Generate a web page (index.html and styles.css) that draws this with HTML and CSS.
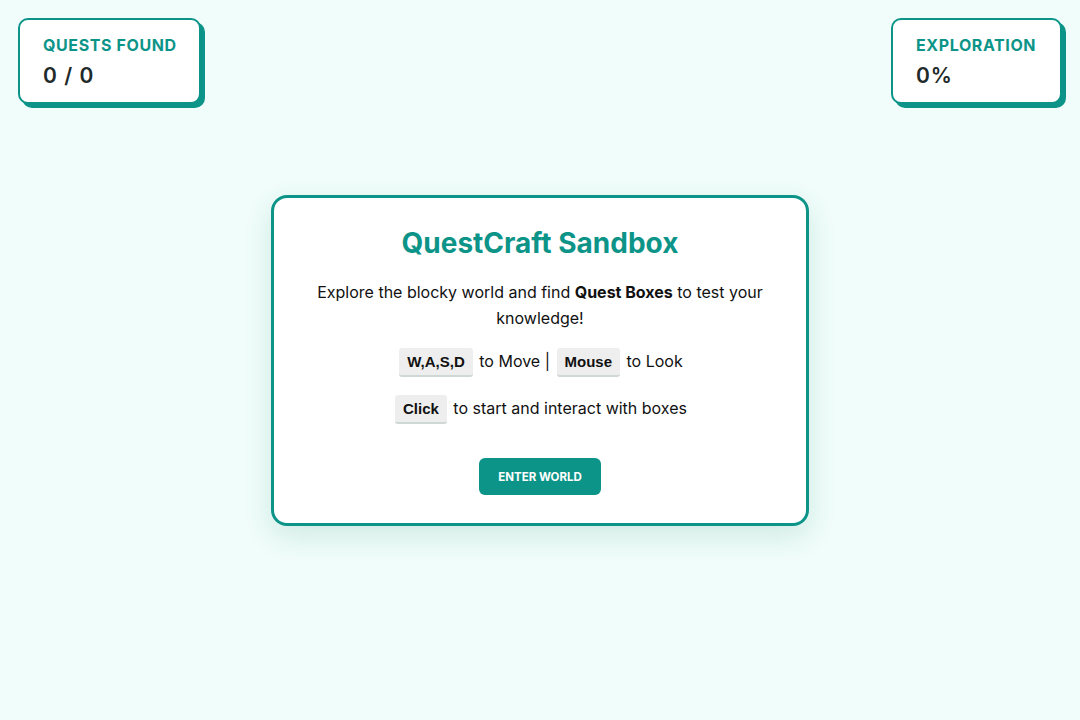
FILE: index.html
```html
<!DOCTYPE html>
<html lang="en">
<head>
<meta charset="utf-8">
<title>QuestCraft Sandbox</title>
<link rel="stylesheet" href="styles.css">
</head>
<body>
<div class="page">
  <header class="hud">
    <div class="stat">
      <div class="stat-label">QUESTS FOUND</div>
      <div class="stat-value">0 / 0</div>
    </div>
    <div class="stat">
      <div class="stat-label">EXPLORATION</div>
      <div class="stat-value">0%</div>
    </div>
  </header>
  <main class="stage">
    <section class="intro">
      <h1 class="title">QuestCraft Sandbox</h1>
      <p class="desc">Explore the blocky world and find <strong>Quest Boxes</strong> to test your knowledge!</p>
      <p class="controls"><kbd class="key">W,A,S,D</kbd> to Move | <kbd class="key">Mouse</kbd> to Look</p>
      <p class="controls"><kbd class="key">Click</kbd> to start and interact with boxes</p>
      <button class="enter">ENTER WORLD</button>
    </section>
  </main>
</div>
</body>
</html>
```
FILE: styles.css
```css
* { box-sizing: border-box; }
html, body { margin: 0; padding: 0; }
body {
  width: 1080px;
  height: 720px;
  background: #f0fdfa;
  font-family: "Inter", "DejaVu Sans", sans-serif;
  color: #111;
  overflow: hidden;
}
.page {
  display: flex;
  flex-direction: column;
  height: 720px;
}
.hud {
  display: flex;
  justify-content: space-between;
  padding: 18px 18px 0 18px;
}
.stat {
  background: #fff;
  border: 2px solid #0d9488;
  border-radius: 10px;
  box-shadow: 4px 4px 0 #0d9488;
  padding: 15px 20px 16px 23px;
  height: 86px;
  white-space: nowrap;
}
.stat:first-child { width: 183px; }
.stat:last-child { width: 171px; }
.stat-label {
  color: #0d9488;
  font-weight: 700;
  font-size: 16px;
  letter-spacing: 0.6px;
  line-height: 20px;
}
.stat-value {
  color: #1f2a2a;
  font-weight: 600;
  font-size: 21px;
  letter-spacing: 1px;
  line-height: 26px;
  margin-top: 8px;
}
.stage {
  display: flex;
  justify-content: center;
  padding-top: 91px;
}
.intro {
  width: 538px;
  background: #fff;
  border: 3px solid #0d9488;
  border-radius: 16px;
  box-shadow: 0 10px 28px rgba(13, 110, 100, 0.14);
  padding: 26px 40px 28px;
  text-align: center;
}
.title {
  margin: 0 0 17px;
  color: #0d9488;
  font-size: 28px;
  font-weight: 700;
  line-height: 38px;
}
.desc {
  margin: 0 0 15px;
  font-size: 16px;
  line-height: 26px;
}
.desc strong { font-weight: 700; }
.controls {
  margin: 0 0 16px;
  font-size: 16px;
  line-height: 30px;
}
.key {
  display: inline-block;
  font-family: "Liberation Sans", Arial, sans-serif;
  font-weight: 700;
  font-size: 15px;
  color: #111;
  background: #eeeeee;
  border-bottom: 2px solid #cfd8d6;
  border-radius: 3px;
  padding: 0 8px;
  line-height: 27px;
  margin: 0 2px;
}
.enter {
  margin-top: 18px;
  width: 122px;
  height: 37px;
  background: #0d9488;
  color: #fff;
  border: none;
  border-radius: 6px;
  font-family: "Inter", sans-serif;
  font-weight: 700;
  font-size: 11.5px;
}
```
